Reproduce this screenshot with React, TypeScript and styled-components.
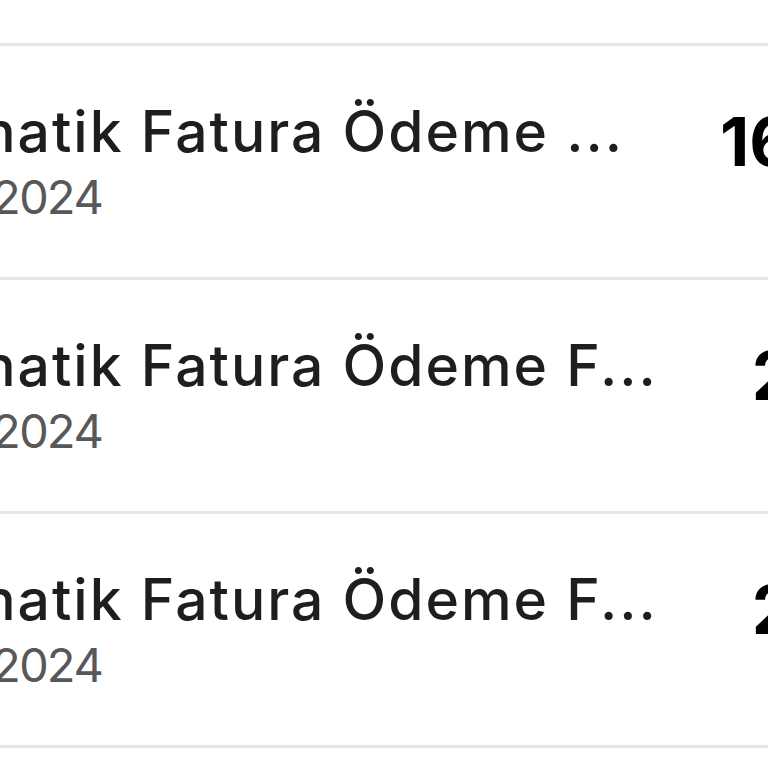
import React from "react";
import styled, { createGlobalStyle } from "styled-components";

const GlobalStyle = createGlobalStyle`
  html, body { margin: 0; padding: 0; background: #ffffff; }
  body { overflow: hidden; font-family: "Inter", "Noto Sans", sans-serif; }
`;

const Viewport = styled.div`
  width: 768px;
  height: 768px;
  overflow: hidden;
  background: #ffffff;
`;

const List = styled.div`
  margin-left: -138px;
  width: 1187px;
  padding-top: 43px;
  display: flex;
  flex-direction: column;
`;

const Row = styled.div`
  border-top: 3px solid #e6e6e6;
  height: 231px;
  display: flex;
  align-items: center;
  justify-content: space-between;
  box-sizing: content-box;
`;

const Left = styled.div`
  display: flex;
  flex-direction: column;
  gap: 4px;
`;

const Title = styled.div`
  font-size: 57px;
  line-height: 66px;
  font-weight: 500;
  letter-spacing: 2px;
  color: #1e1e1e;
  white-space: nowrap;
`;

const DateText = styled.div`
  font-size: 47px;
  line-height: 56px;
  font-weight: 400;
  letter-spacing: -3px;
  font-variant-numeric: tabular-nums;
  color: #58585a;
  white-space: nowrap;
`;

const Amount = styled.div`
  align-self: flex-start;
  margin-top: 60px;
  font-size: 68px;
  line-height: 70px;
  font-weight: 700;
  color: #000000;
  white-space: nowrap;
`;

const rows = [
  { title: "Otomatik Fatura Ödeme ...", date: "12.03.2024", amount: "164,90 TL" },
  { title: "Otomatik Fatura Ödeme F...", date: "12.02.2024", amount: "24,90 TL" },
  { title: "Otomatik Fatura Ödeme F...", date: "12.01.2024", amount: "24,90 TL" },
  { title: "Otomatik Fatura Ödeme F...", date: "12.12.2023", amount: "24,90 TL" },
];

export default function App() {
  return (
    <>
      <GlobalStyle />
      <Viewport>
        <List>
          {rows.map((r, i) => (
            <Row key={i}>
              <Left>
                <Title>{r.title}</Title>
                <DateText>{r.date}</DateText>
              </Left>
              <Amount>{r.amount}</Amount>
            </Row>
          ))}
        </List>
      </Viewport>
    </>
  );
}
